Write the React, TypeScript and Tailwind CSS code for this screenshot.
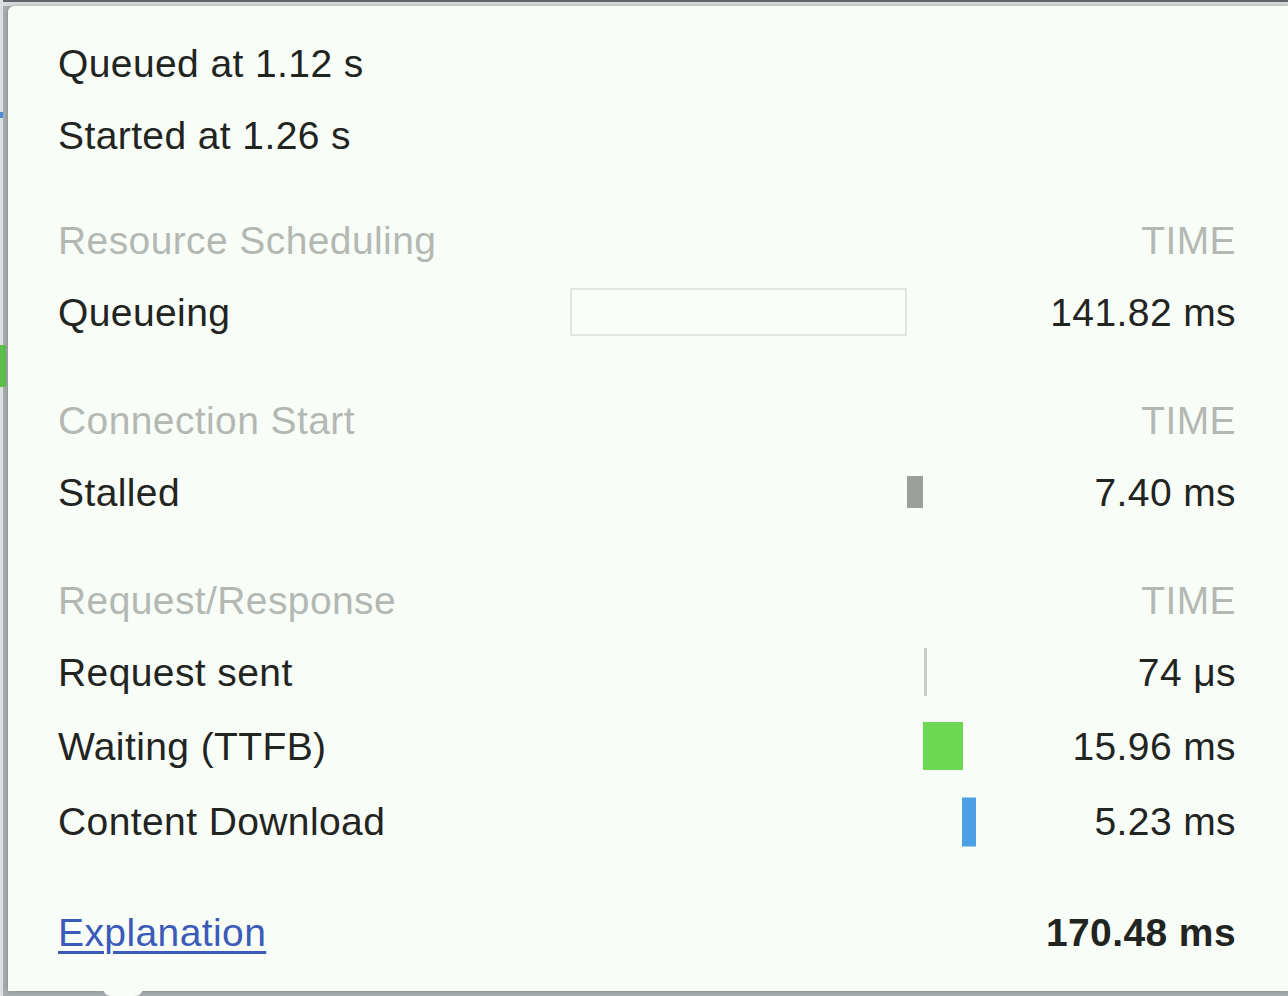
import React from 'react';

type Bar = { left: number; width: number; height: number; className: string };

type Row = {
    label: string;
    time: string;
    bar?: Bar;
    rowClass: string;
};

type Section = {
    title: string;
    gapClass: string;
    rows: Row[];
};

// bar offsets are in px inside the 406px timeline track
const sections: Section[] = [
    {
        title: 'Resource Scheduling',
        gapClass: 'mt-[33px]',
        rows: [
            {
                label: 'Queueing',
                time: '141.82 ms',
                rowClass: 'h-[72px]',
                bar: { left: 0, width: 337, height: 48, className: 'border-2 border-[#e3e6e2] bg-[#fbfdfa]' },
            },
        ],
    },
    {
        title: 'Connection Start',
        gapClass: 'mt-[36px]',
        rows: [
            {
                label: 'Stalled',
                time: '7.40 ms',
                rowClass: 'h-[72px]',
                bar: { left: 337, width: 16, height: 32, className: 'bg-[#9c9f9b]' },
            },
        ],
    },
    {
        title: 'Request/Response',
        gapClass: 'mt-[36px]',
        rows: [
            {
                label: 'Request sent',
                time: '74 μs',
                rowClass: 'h-[72px]',
                bar: { left: 354, width: 3, height: 48, className: 'bg-[#c9cbc8]' },
            },
            {
                label: 'Waiting (TTFB)',
                time: '15.96 ms',
                rowClass: 'h-[76px]',
                bar: { left: 353, width: 40, height: 48, className: 'bg-[#6cd853]' },
            },
            {
                label: 'Content Download',
                time: '5.23 ms',
                rowClass: 'h-[75px]',
                bar: { left: 392, width: 14, height: 49, className: 'bg-[#4c9fe2]' },
            },
        ],
    },
];

const TimingRow: React.FC<{ row: Row }> = ({ row }) => (
    <div className={`flex items-center ${row.rowClass}`}>
        <div className="w-[512px] shrink-0 text-[#222422]">{row.label}</div>
        <div className="relative h-full w-[406px] shrink-0">
            {row.bar && (
                <div
                    className={`absolute top-1/2 -translate-y-1/2 ${row.bar.className}`}
                    style={{ left: row.bar.left, width: row.bar.width, height: row.bar.height }}
                />
            )}
        </div>
        <div className="flex-1 text-right text-[#222422]">{row.time}</div>
    </div>
);

export default function App() {
    return (
        <div className="relative h-[996px] w-[1288px] overflow-hidden bg-[#a7acae] font-['Liberation_Sans',Arial,sans-serif]">
            {/* strips of the devtools panel behind the popover */}
            <div className="absolute left-0 top-0 h-[2px] w-full bg-[#5f6468]" />
            <div className="absolute left-0 top-[2px] h-[4px] w-full bg-[#d9dcdd]" />
            <div className="absolute left-0 top-0 h-full w-[3px] bg-[#dde0e1]" />
            <div className="absolute left-0 top-[112px] h-[6px] w-[3px] bg-[#4a8fd8]" />
            <div className="absolute left-0 top-[345px] h-[42px] w-[6px] bg-[#5cbf4a]" />

            <div className="absolute left-[8px] top-[6px] h-[985px] w-[1280px] rounded-tl-[6px] bg-[#f9fdf8] pl-[50px] pr-[52px] pt-[21px] text-[39px] leading-none tracking-[0.4px] shadow-[0_0_4px_rgba(0,0,0,0.25)]">
                <div className="flex h-[72px] items-center text-[#222422]">Queued at 1.12 s</div>
                <div className="flex h-[72px] items-center text-[#222422]">Started at 1.26 s</div>

                {sections.map(section => (
                    <div key={section.title} className={section.gapClass}>
                        <div className="flex h-[72px] items-center justify-between text-[#b4b8b3]">
                            <span>{section.title}</span>
                            <span>TIME</span>
                        </div>
                        {section.rows.map(row => (
                            <TimingRow key={row.label} row={row} />
                        ))}
                    </div>
                ))}

                <div className="mt-[37px] flex h-[72px] items-center justify-between">
                    <a href="#" className="text-[#3a5bb8] underline decoration-[3px] underline-offset-[5px]">
                        Explanation
                    </a>
                    <span className="font-bold text-[#222422]">170.48 ms</span>
                </div>
            </div>

            {/* popover arrow */}
            <div className="absolute left-[103px] top-[988px] h-[8px] w-[40px] rounded-b-[10px] bg-[#f9fdf8]" />
        </div>
    );
}
